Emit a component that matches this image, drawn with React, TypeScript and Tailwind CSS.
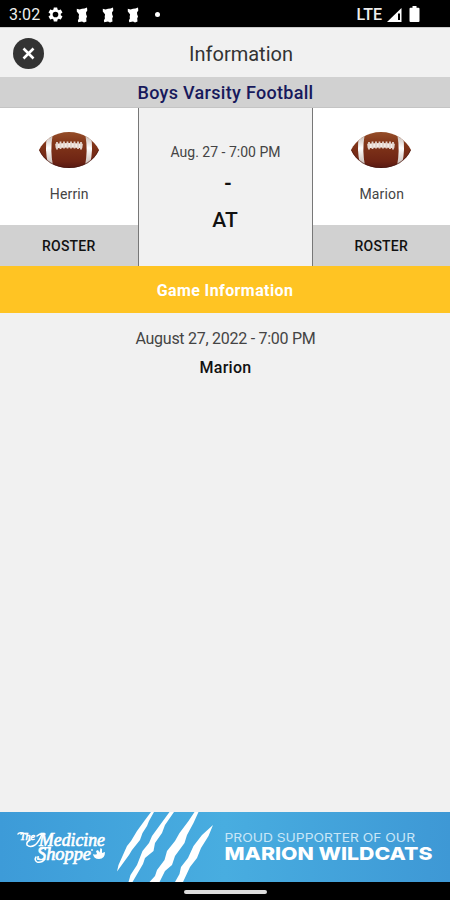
import { useId } from "react"

const teams = {
  away: "Herrin",
  home: "Marion",
}

function FootballIcon() {
  const id = useId()
  return (
    <svg className="w-[62px] h-[38px]" viewBox="0 0 62 38">
      <defs>
        <linearGradient id={`${id}-skin`} x1="0" y1="0" x2="0" y2="1">
          <stop offset="0" stopColor="#97502a" />
          <stop offset="0.3" stopColor="#83371a" />
          <stop offset="0.8" stopColor="#6e2414" />
          <stop offset="1" stopColor="#521712" />
        </linearGradient>
        <linearGradient id={`${id}-band`} x1="0" y1="0" x2="0" y2="1">
          <stop offset="0" stopColor="#c9bdb6" />
          <stop offset="0.4" stopColor="#ffffff" />
          <stop offset="1" stopColor="#c4b5ae" />
        </linearGradient>
        <clipPath id={`${id}-ball`}>
          <path d="M1 19C6 9 17 1 31 1s25 8 30 18C56 30 45 37 31 37S6 30 1 19z" />
        </clipPath>
      </defs>
      <g clipPath={`url(#${id}-ball)`}>
        <rect width="62" height="38" fill={`url(#${id}-skin)`} />
        <path d="M9 5h5.500q-2.500 14 .5 30l-5-2q-3.500-14-1-28z" fill={`url(#${id}-band)`} />
        <path d="M53 5h-5.500q2.500 14-.5 30l5-2q3.500-14 1-28z" fill={`url(#${id}-band)`} />
        <path d="M1 19C6 30 17 37 31 37s25-7 30-18" fill="none" stroke="#3d100b" strokeOpacity="0.6" strokeWidth="1.500" />
      </g>
      <path d="M17.500 15q13.500-1.500 27 0" fill="none" stroke="#f4ece8" strokeWidth="4.500" />
      <path
        d="M19 11v7.500M22.500 10.500v7.500M26 10.500v7M29.500 10.500v7M33 10.500v7M36.500 10.500v7M40 10.500v7.500M43 11v7.500"
        stroke="#e3d3cb"
        strokeWidth="1.800"
      />
    </svg>
  )
}

function CatIcon() {
  return (
    <svg className="w-3 h-4" viewBox="0 0 12 16" fill="#fff">
      <path d="M.8 1.800l2.700.6L6 1.800 8.500 1.500 11 .5l.3 3-1.300 2 .2 2 .8 2-.8 2 .3 3L8 15.500l-2-1-3.800.8-.3-2 1-1.800-.2-2 .4-2L2 6 .8 4.500z" />
    </svg>
  )
}

function StatusBar() {
  return (
    <div className="h-[27px] shrink-0 bg-black flex items-center pl-[9px] pr-[30px] text-[#eee]">
      <span className="text-[16px] leading-none w-[32px] tracking-[0.1px] pt-[2px]">3:02</span>
      <svg className="w-[17px] h-[17px] ml-[6px] mt-[2px]" viewBox="0 0 24 24" fill="#fff">
        <path d="M19.430 12.980c.04-.32.07-.64.07-.98s-.03-.66-.07-.98l2.110-1.650c.19-.15.240-.42.120-.64l-2-3.460c-.12-.22-.39-.3-.61-.22l-2.490 1c-.52-.4-1.080-.73-1.690-.98l-.38-2.650A.49.49 0 0 0 14 2h-4c-.25 0-.46.180-.49.420l-.38 2.650c-.61.250-1.170.590-1.690.980l-2.490-1c-.23-.09-.49 0-.61.220l-2 3.460c-.13.220-.07.490.120.640l2.110 1.650c-.04.320-.07.650-.07.980s.03.660.070.980l-2.110 1.650c-.19.150-.24.420-.12.640l2 3.460c.120.220.390.300.610.220l2.490-1c.520.400 1.080.730 1.690.980l.38 2.650c.03.240.240.420.490.420h4c.25 0 .46-.18.490-.42l.38-2.650c.61-.25 1.170-.59 1.690-.98l2.490 1c.230.090.490 0 .610-.22l2-3.460c.12-.22.070-.49-.12-.64zM12 16a4 4 0 1 1 0-8 4 4 0 0 1 0 8z" />
      </svg>
      <div className="flex gap-[13.500px] ml-[12px] mt-[2px]">
        <CatIcon />
        <CatIcon />
        <CatIcon />
      </div>
      <span className="w-[5px] h-[5px] rounded-full bg-white ml-[16px] mt-[2px]" />
      <span className="ml-auto text-[16px] leading-none font-medium pt-[2px]">LTE</span>
      <svg className="w-[15px] h-[14px] ml-[5px] mt-[2px]" viewBox="0 0 15 14">
        <path d="M0 14L14.500 0v14z" fill="#fff" />
        <path d="M11 5.500h2V12h-2z" fill="#000" />
      </svg>
      <svg className="w-[11px] h-[16px] ml-[7px] mt-[1px]" viewBox="0 0 11 16">
        <path d="M3.500 0h4v1.800H9.500q1 0 1 1V15q0 1-1 1h-8q-1 0-1-1V2.800q0-1 1-1h2z" fill="#fff" />
      </svg>
    </div>
  )
}

function TeamCard({ name }: { name: string }) {
  return (
    <div className="flex-1 flex flex-col">
      <div className="h-[117px] bg-white flex flex-col items-center pt-[23px]">
        <FootballIcon />
        <span className="mt-[15px] pl-px text-[14px] leading-5 text-[#444] tracking-[0.15px]">{name}</span>
      </div>
      <button className="flex-1 bg-[#d1d1d1] text-[14px] font-medium text-[#111] tracking-[0.2px] pt-[1px]">ROSTER</button>
    </div>
  )
}

function SponsorBanner() {
  return (
    <div className="h-[70px] shrink-0 flex bg-linear-to-r from-[#3d9bd8] via-[#48ade0] to-[#3e98d5]">
      <svg className="w-[224px] h-[70px]" viewBox="0 0 224 70" fill="#fff">
        {/* Medicine Shoppe wordmark */}
        <g fontFamily="'Liberation Serif', serif" fontStyle="italic" stroke="#fff" strokeWidth="0.700">
          <text x="20" y="28" fontSize="11" textLength="15" lengthAdjust="spacingAndGlyphs">The</text>
          <text x="39" y="34" fontSize="19" textLength="66" lengthAdjust="spacingAndGlyphs">Medicine</text>
          <text x="37" y="48" fontSize="18" textLength="54" lengthAdjust="spacingAndGlyphs">Shoppe</text>
        </g>
        <path
          d="M18 22q1-2 5-1M30 28q-4 2-3 5 3 3 8 0 4-3 7-11M45 22q-5-1-8 2M36 45q-2 3 1 5 5 1 8-3M41 37q4-2 9-1"
          fill="none"
          stroke="#fff"
          strokeWidth="1.500"
          strokeLinecap="round"
        />
        <circle cx="92" cy="38" r="0.900" />
        <path d="M93 42q2 1 4 0l-1-3 2-1 1.500 2.500 1-4.500 1.500 1v4l3-1q0 7-6 7-5.500 0-6-5z" />
        {/* claw marks */}
        <path d="M151 0H154L149 9 147 14 142.500 21 140 28 132 38 129 43 117 59.500 118.500 53 127 34 131 29 137 19 145 8z" />
        <path d="M169.500 0H174L165 13 162 21 155 31 153.500 39 145 46 143 52 132.500 70H128.500L130.500 63 137 53 142.500 39 149 31 152 24 160 13z" />
        <path d="M194.500 0H198.500L193.500 11 187 23 184.500 31 175 44 172 53 165 59 159.500 70H149.500L155 64 157 58 164.500 48 167 39 175 29 179.500 21 188.500 9z" />
        <path d="M213 13L208.500 24 201 36 197 46 190 55 183 70H175L179.500 62 181 55 188 46 193.500 34 202 23z" />
      </svg>
      <svg className="w-[212px] h-[70px] overflow-visible" viewBox="0 0 212 70" fontFamily="Inter, sans-serif">
        <text x="0.500" y="30" fontSize="12" fill="#c9e6f7" textLength="190.500" lengthAdjust="spacingAndGlyphs">
          PROUD SUPPORTER OF OUR
        </text>
        <text x="0.500" y="47.500" fontSize="18" fontWeight="800" fill="#fff" textLength="208" lengthAdjust="spacingAndGlyphs">
          MARION WILDCATS
        </text>
      </svg>
    </div>
  )
}

export default function App() {
  return (
    <div className="w-[450px] h-[900px] flex flex-col overflow-hidden bg-[#f1f1f1] font-[Roboto,sans-serif]">
      <StatusBar />

      <header className="h-[50px] shrink-0 grid grid-cols-[60px_1fr_60px] items-center border-t border-[#ccc]">
        <button className="ml-[13px] mt-[2px] w-[31px] h-[31px] rounded-full bg-[#333] flex items-center justify-center">
          <svg className="w-[13px] h-[13px]" viewBox="0 0 13 13">
            <path d="M1.500 1.500l10 10M11.500 1.500l-10 10" stroke="#fff" strokeWidth="2.600" />
          </svg>
        </button>
        <h1 className="text-[20px] text-center text-[#333] pl-[32px] pt-[2px]">Information</h1>
      </header>

      <div className="h-[31px] shrink-0 bg-[#d1d1d1] flex items-center justify-center pl-px text-[18px] font-medium text-[#17195c] tracking-[0.3px] border-b border-[#c4c4c4]">
        Boys Varsity Football
      </div>

      <section className="h-[158px] shrink-0 flex">
        <TeamCard name={teams.away} />
        <div className="w-[175px] border-x border-[#777] flex flex-col items-center pt-[34px] text-[#111]">
          <span className="text-[14px] leading-5 text-[#444] pl-px">Aug. 27 - 7:00 PM</span>
          <span className="text-[20px] leading-6 font-bold mt-[9px] pl-[6px]">-</span>
          <span className="text-[21px] leading-6 font-medium mt-[13px]">AT</span>
        </div>
        <TeamCard name={teams.home} />
      </section>

      <div className="h-[47px] shrink-0 bg-[#ffc423] text-white font-bold text-[16px] tracking-[0.4px] flex items-center justify-center pt-[2px]">
        Game Information
      </div>

      <main className="flex-1 flex flex-col items-center pt-[16px] pl-px">
        <p className="text-[16px] leading-5 text-[#444] tracking-[-0.27px]">August 27, 2022 - 7:00 PM</p>
        <p className="text-[16px] leading-5 font-medium text-[#111] tracking-[0.3px] mt-[9px]">{teams.home}</p>
      </main>

      <SponsorBanner />

      <div className="h-[18px] shrink-0 bg-black flex justify-center pt-[8px]">
        <span className="w-[83px] h-[4px] rounded-sm bg-[#ddd]" />
      </div>
    </div>
  )
}
